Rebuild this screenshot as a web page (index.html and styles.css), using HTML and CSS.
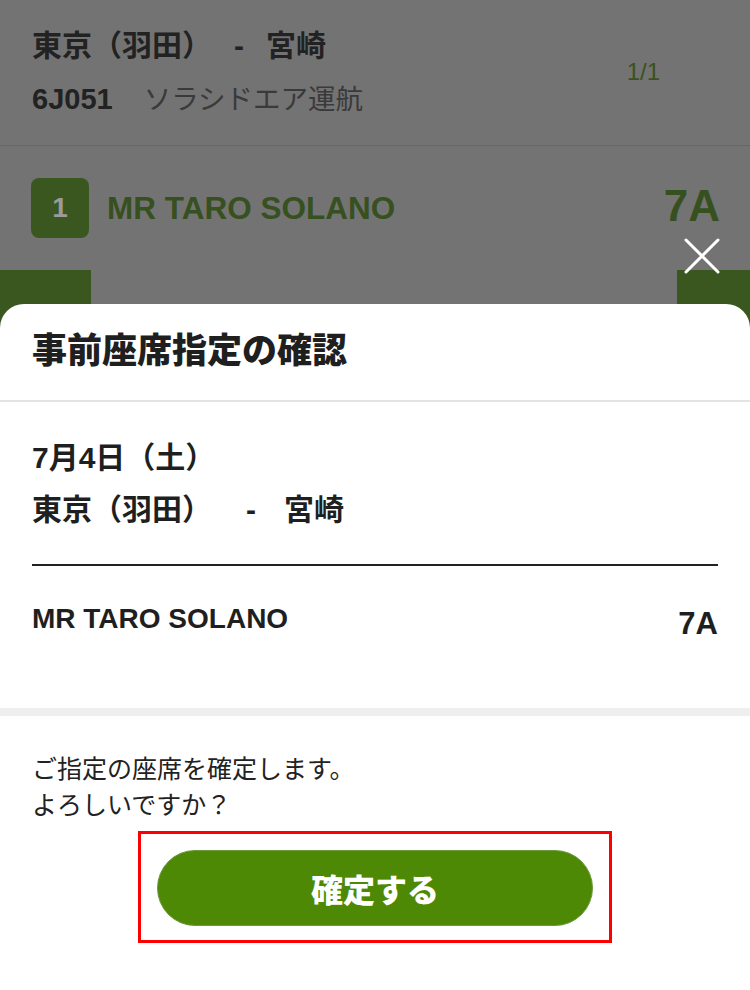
FILE: index.html
```html
<!DOCTYPE html>
<html lang="ja">
<head>
<meta charset="utf-8">
<title>事前座席指定の確認</title>
<link rel="stylesheet" href="styles.css">
</head>
<body>
<div class="page">
  <section class="flight">
    <div class="flight-info">
      <div class="route">東京（羽田）<span class="dash">-</span>宮崎</div>
      <div class="flight-sub"><span class="flight-no">6J051</span><span class="operator">ソラシドエア運航</span></div>
    </div>
    <div class="pager">1/1</div>
  </section>
  <section class="pax-row">
    <div class="badge">1</div>
    <div class="pax-name">MR TARO SOLANO</div>
    <div class="pax-seat">7A</div>
  </section>
  <div class="tabs">
    <div class="tab tab-left"></div>
    <div class="tab tab-right"></div>
  </div>
</div>

<button class="close" aria-label="閉じる">
  <svg width="36" height="36" viewBox="0 0 36 36"><path d="M2 2 L34 34 M34 2 L2 34" stroke="#fff" stroke-width="3" stroke-linecap="round" fill="none"/></svg>
</button>

<div class="modal">
  <div class="m-head">事前座席指定の確認</div>
  <div class="m-body">
    <div class="m-date">7月4日（土）</div>
    <div class="m-route">東京（羽田）<span class="m-dash">-</span>宮崎</div>
    <div class="m-pax">
      <div class="m-name">MR TARO SOLANO</div>
      <div class="m-seat">7A</div>
    </div>
  </div>
  <div class="m-foot">
    <p class="m-msg">ご指定の座席を確定します。<br>よろしいですか？</p>
    <div class="highlight">
      <button class="confirm">確定する</button>
    </div>
  </div>
</div>
</body>
</html>
```

FILE: styles.css
```css
html, body {
  margin: 0;
  padding: 0;
}
body {
  width: 750px;
  height: 990px;
  overflow: hidden;
  background: #737373;
  font-family: "Liberation Sans", "Noto Sans CJK JP", sans-serif;
  color: #1f1f1f;
  position: relative;
}
.page {
  background: #737373;
}
.flight {
  display: flex;
  align-items: center;
  justify-content: space-between;
  padding: 21px 90px 20px 32px;
  border-bottom: 1px solid #676767;
}
.route {
  font-size: 30px;
  font-weight: 700;
  line-height: 50px;
  color: #222;
}
.dash {
  display: inline-block;
  margin: 0 22px 0 22px;
}
.flight-sub {
  margin-top: 3px;
  line-height: 50px;
  display: flex;
  align-items: baseline;
}
.flight-no {
  font-size: 29px;
  font-weight: 700;
  color: #222;
}
.operator {
  font-size: 27.5px;
  color: #3a3a3a;
  margin-left: 31px;
}
.pager {
  font-size: 24px;
  color: #3a5220;
  margin-top: -2px;
}
.pax-row {
  display: flex;
  align-items: center;
  padding: 32px 30px 0 31px;
}
.badge {
  width: 58px;
  height: 60px;
  border-radius: 8px;
  background: #3b5720;
  color: #9b9b9b;
  font-size: 28px;
  font-weight: 700;
  display: flex;
  align-items: center;
  justify-content: center;
}
.pax-name {
  margin-left: 18px;
  font-size: 31.5px;
  font-weight: 700;
  color: #37501f;
  flex: 1;
}
.pax-seat {
  font-size: 44px;
  font-weight: 700;
  color: #37501f;
  margin-top: -4px;
}
.tabs {
  display: flex;
  justify-content: space-between;
  margin-top: 32px;
}
.tab {
  height: 60px;
  background: #3b5720;
}
.tab-left { width: 91px; }
.tab-right { width: 73px; }

.close {
  position: absolute;
  top: 238px;
  left: 684px;
  width: 36px;
  height: 36px;
  padding: 0;
  border: 0;
  background: transparent;
  line-height: 0;
}

.modal {
  position: absolute;
  top: 304px;
  left: 0;
  right: 0;
  bottom: 0;
  background: #fff;
  border-radius: 24px 24px 0 0;
}
.m-head {
  height: 98px;
  box-sizing: border-box;
  padding: 24px 32px 0;
  font-size: 35px;
  font-weight: 900;
  line-height: 46px;
  color: #1f1f1f;
  border-bottom: 2px solid #e3e3e3;
}
.m-body {
  padding: 30px 32px 0;
}
.m-date, .m-route {
  font-size: 30px;
  font-weight: 700;
  line-height: 52px;
  color: #1f1f1f;
}
.m-route {
  padding-bottom: 28px;
  border-bottom: 2px solid #222;
}
.m-dash {
  display: inline-block;
  margin: 0 28px 0 34px;
}
.m-pax {
  display: flex;
  justify-content: space-between;
  align-items: flex-start;
  height: 142px;
  box-sizing: border-box;
  padding-top: 34px;
}
.m-name {
  font-size: 28px;
  font-weight: 700;
  line-height: 38px;
  color: #1f1f1f;
}
.m-seat {
  font-size: 31px;
  font-weight: 700;
  line-height: 38px;
  margin-top: 5px;
  color: #1f1f1f;
}
.m-foot {
  border-top: 8px solid #efefef;
  padding: 0 32px;
}
.m-msg {
  margin: 35px 0 0;
  font-size: 25px;
  line-height: 36px;
  color: #222;
}
.highlight {
  width: 468px;
  height: 90px;
  margin: 8px auto 0;
  border: 3px solid #f00;
  display: flex;
  align-items: flex-start;
  justify-content: center;
  padding-top: 16px;
  box-sizing: content-box;
}
.confirm {
  width: 436px;
  height: 76px;
  border-radius: 38px;
  border: 1px solid #6b9a3c;
  background: #4e8905;
  color: #fff;
  font-family: "Liberation Sans", "Noto Sans CJK JP", sans-serif;
  font-size: 32px;
  font-weight: 900;
  padding: 0;
}
```
